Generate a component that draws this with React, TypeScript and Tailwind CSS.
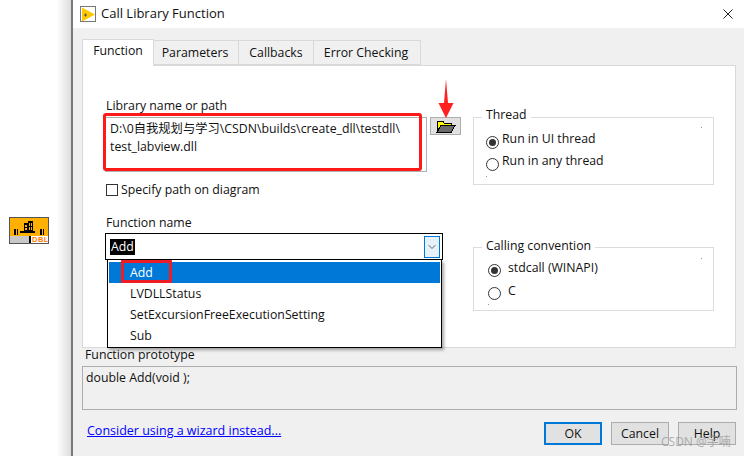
import React from 'react';
import { ChevronDown } from 'lucide-react';

const FONT = "font-['Open_Sans','Noto_Sans_CJK_SC',sans-serif]";

const LvIcon = () => (
  <svg width="40" height="27" viewBox="0 0 40 27" shapeRendering="crispEdges">
    <rect x="0.5" y="0.5" width="39" height="26" fill="#ffb000" stroke="#555" />
    <rect x="1" y="19" width="19" height="7" fill="#c8c8c8" />
    <rect x="20" y="19" width="2" height="7" fill="#000" />
    <rect x="22" y="19" width="17" height="7" fill="#fff" />
    <text x="23" y="25" fontSize="7.500" fontWeight="700" letterSpacing="0.5" fill="#ff7a00" fontFamily="'Liberation Sans',sans-serif" shapeRendering="auto">DBL</text>
    <path d="M15 6h4V4h5v10h2v2H11v-2h4z M16 8v2h2V8z M16 11v2h2v-2z M20 6v3h1V6z M22 6v3h1V6z M20 10v3h1v-3z M22 10v3h1v-3z" fill="#000" fillRule="evenodd" />
    <path d="M5 12h1.500v3.500H5zM7.500 12H9v3.500H7.500zM5 16h1.500v1.500H5zM7.500 16H9v1.500H7.500zM31 12h1.500v3.500H31zM33.500 12H35v3.500h-1.500zM31 16h1.500v1.500H31zM33.500 16H35v1.500h-1.500z" fill="#000" />
  </svg>
);

const FolderIcon = () => (
  <svg width="20" height="13" viewBox="0 0 20 13" shapeRendering="crispEdges">
    <path d="M1 1.500h6l1.500 2H15v2H5L1 11.500z" fill="#ffff00" stroke="#000" />
    <path d="M1 12.500l4-7h14l-4 7z" fill="#6b6b6b" stroke="#000" />
  </svg>
);

const Radio = ({ checked }: { checked?: boolean }) => (
  <span className="flex h-[13px] w-[13px] shrink-0 items-center justify-center rounded-full border border-[#333] bg-white">
    {checked && <span className="h-[7px] w-[7px] rounded-full bg-[#333]" />}
  </span>
);

const GroupBox = ({ title, titleTop, className, children }: { title: string; titleTop: string; className: string; children: React.ReactNode }) => (
  <div className={`relative border border-[#dcdcdc] ${className}`}>
    <span className={`absolute left-[8px] bg-white px-[4px] leading-[18px] ${titleTop}`}>{title}</span>
    {children}
  </div>
);

const DialogButton = ({ label, primary }: { label: string; primary?: boolean }) => (
  <button
    className={`h-[23px] w-[58px] bg-[#e1e1e1] text-center leading-[19px] ${primary ? 'border-2 border-[#0078d7]' : 'border border-[#adadad]'}`}
  >
    {label}
  </button>
);

export default function App() {
  return (
    <div className={`flex h-[456px] w-[744px] overflow-hidden bg-white text-[12.3px] text-[#111] ${FONT}`}>
      {/* canvas behind the dialog */}
      <div className="flex w-[71px] shrink-0 flex-col bg-gradient-to-r from-white from-80% to-[#dddddd] pl-[9px] pt-[217px]">
        <LvIcon />
      </div>

      <div className="relative flex min-w-0 flex-1 flex-col border-l-2 border-[#7a7a7a] bg-[#f0f0f0]">
        {/* title bar */}
        <div className="flex h-[28px] shrink-0 items-center bg-white px-[7px] text-[13px]">
          <span className="flex h-[16px] w-[16px] items-center justify-center border-[1.5px] border-[#777] bg-white">
            <svg width="13" height="13" viewBox="0 0 13 13">
              <path d="M0 0h1l12 6.500L1 13H0z" fill="#ffc800" />
              <path d="M3 5.500h1v1h1v1H4v1H3v-1H2v-1h1z" fill="#555" />
            </svg>
          </span>
          <span className="ml-[5px]">Call Library Function</span>
          <svg className="ml-auto mr-[4px]" width="10" height="10" viewBox="0 0 10 10" stroke="#222" fill="none">
            <path d="M0.500 0.500l9 9M9.500 0.500l-9 9" />
          </svg>
        </div>

        {/* tabs */}
        <div className="box-content flex h-[27px] shrink-0 items-end pl-[9px] pt-[10px]">
          <div className="relative z-10 -mb-px flex h-[27px] w-[72px] items-start justify-center border border-b-0 border-[#d9d9d9] bg-white pt-[2px]">Function</div>
          <div className="flex h-[25px] w-[85px] items-center justify-center border border-l-0 border-[#d9d9d9] pt-[2px] pr-[2px]">Parameters</div>
          <div className="flex h-[25px] w-[75px] items-center justify-center border border-l-0 border-[#d9d9d9] pt-[2px]">Callbacks</div>
          <div className="flex h-[25px] w-[107px] items-center justify-center border border-l-0 border-[#d9d9d9] pt-[2px] pr-[2px]">Error Checking</div>
        </div>

        {/* tab page */}
        <div className="ml-[9px] mr-[8px] flex h-[283px] shrink-0 gap-[12px] border border-[#d9d9d9] bg-white pl-[23px]">
          <div className="w-[355px] shrink-0 pt-[33px]">
            <div className="leading-[14px]">Library name or path</div>
            <div className="-ml-px mt-[4px] flex">
              <div className="h-[55px] w-[322px] border border-[#b0b0b0] bg-white pl-[4px] pt-[2px] leading-[18px]">
                <div className="whitespace-nowrap">D:\0自我规划与学习\CSDN\builds\create_dll\testdll\</div>
                <div>test_labview.dll</div>
              </div>
              <div className="ml-[3px] flex h-[18px] w-[31px] items-center justify-center border border-[#adadad] bg-[#e1e1e1]">
                <FolderIcon />
              </div>
            </div>
            <div className="mt-[9px] flex items-center">
              <span className="h-[12px] w-[12px] border border-[#333] bg-white" />
              <span className="ml-[3px] pt-px leading-[16px]">Specify path on diagram</span>
            </div>
            <div className="mt-[17px] leading-[16px]">Function name</div>
            <div className="relative -ml-px mt-[2px] h-[27px] w-[338px]">
              <div className="flex h-[27px] items-center border-[1.5px] border-black bg-white pl-[4px] pr-[2px]">
                <span className="bg-black px-[1px] leading-[16px] text-white">Add</span>
                <span className="ml-auto flex h-[22px] w-[16px] items-center justify-center border border-[#0078d7] bg-[#e5f1fb]">
                  <ChevronDown size={12} strokeWidth={1.5} color="#333" />
                </span>
              </div>
              {/* open dropdown list */}
              <div className="absolute left-[2px] top-[27px] z-20 w-[335px] border border-t-0 border-black bg-white px-[1px] pb-[1px] pt-[2px] shadow-[2px_2px_3px_rgba(0,0,0,0.35)]">
                <div className="h-[21px] bg-[#0078d7] pl-[21px] leading-[21px] text-white">Add</div>
                <div className="h-[21px] pl-[21px] leading-[21px]">LVDLLStatus</div>
                <div className="h-[21px] pl-[21px] leading-[21px]">SetExcursionFreeExecutionSetting</div>
                <div className="h-[21px] pl-[21px] leading-[21px]">Sub</div>
              </div>
            </div>
          </div>

          <div className="w-[241px] shrink-0 pt-[51px]">
            <GroupBox title="Thread" titleTop="-top-[12px]" className="h-[68px] w-[241px]">
              <div className="flex flex-col gap-[8px] pl-[12px] pt-[17px]">
                <div className="flex h-[14px] items-center gap-[3px]"><Radio checked /><span className="-mt-[6px]">Run in UI thread</span></div>
                <div className="flex h-[14px] items-center gap-[3px]"><Radio /><span className="-mt-[6px]">Run in any thread</span></div>
              </div>
              <span className="absolute right-[11px] top-[9px] h-px w-px bg-[#999]" />
              <span className="absolute bottom-[7px] left-[12px] h-px w-px bg-[#999]" />
            </GroupBox>
            <GroupBox title="Calling convention" titleTop="-top-[11px]" className="mt-[62px] h-[64px] w-[241px]">
              <div className="flex flex-col gap-[9px] pl-[14px] pt-[15px]">
                <div className="flex h-[14px] items-center gap-[7px]"><Radio checked /><span className="-mt-[4px]">stdcall (WINAPI)</span></div>
                <div className="flex h-[14px] items-center gap-[7px]"><Radio /><span className="-mt-[4px]">C</span></div>
              </div>
              <span className="absolute right-[11px] top-[10px] h-px w-px bg-[#999]" />
              <span className="absolute bottom-[5px] left-[14px] h-px w-px bg-[#999]" />
            </GroupBox>
          </div>
        </div>

        {/* prototype */}
        <div className="ml-[12px] mt-[-1px] leading-[16px]">Function prototype</div>
        <div className="ml-[9px] mr-[7px] mt-[3px] h-[44px] border border-[#adadad] pl-[3px] pt-[1px] leading-[20px]">double Add(void );</div>

        {/* footer */}
        <div className="ml-[14px] mr-[8px] mt-[12px] flex items-start justify-between">
          <a className="text-[12.5px] leading-[17px] text-[#0000ff] underline">Consider using a wizard instead...</a>
          <div className="flex gap-[9px]">
            <DialogButton label="OK" primary />
            <DialogButton label="Cancel" />
            <DialogButton label="Help" />
          </div>
        </div>

        {/* annotations drawn over the screenshot */}
        <div className="absolute left-[30px] top-[113px] h-[58px] w-[319px] rounded-[3px] border-[3px] border-[#ff1a1a]" />
        <div className="absolute left-[48px] top-[260px] z-30 h-[23px] w-[51px] rounded-[1px] border-[3px] border-[#ee1c25]" />
        <svg className="absolute left-[365px] top-[79px]" width="16" height="40" viewBox="0 0 16 40">
          <path d="M8 0L10 24L15.500 24L8 39L0.500 24L6 24z" fill="#ff2020" />
        </svg>
        <span className="absolute left-[588px] top-[433px] text-[12px] text-[#9a9a9a]/80">CSDN @宇喃</span>
      </div>
    </div>
  );
}
